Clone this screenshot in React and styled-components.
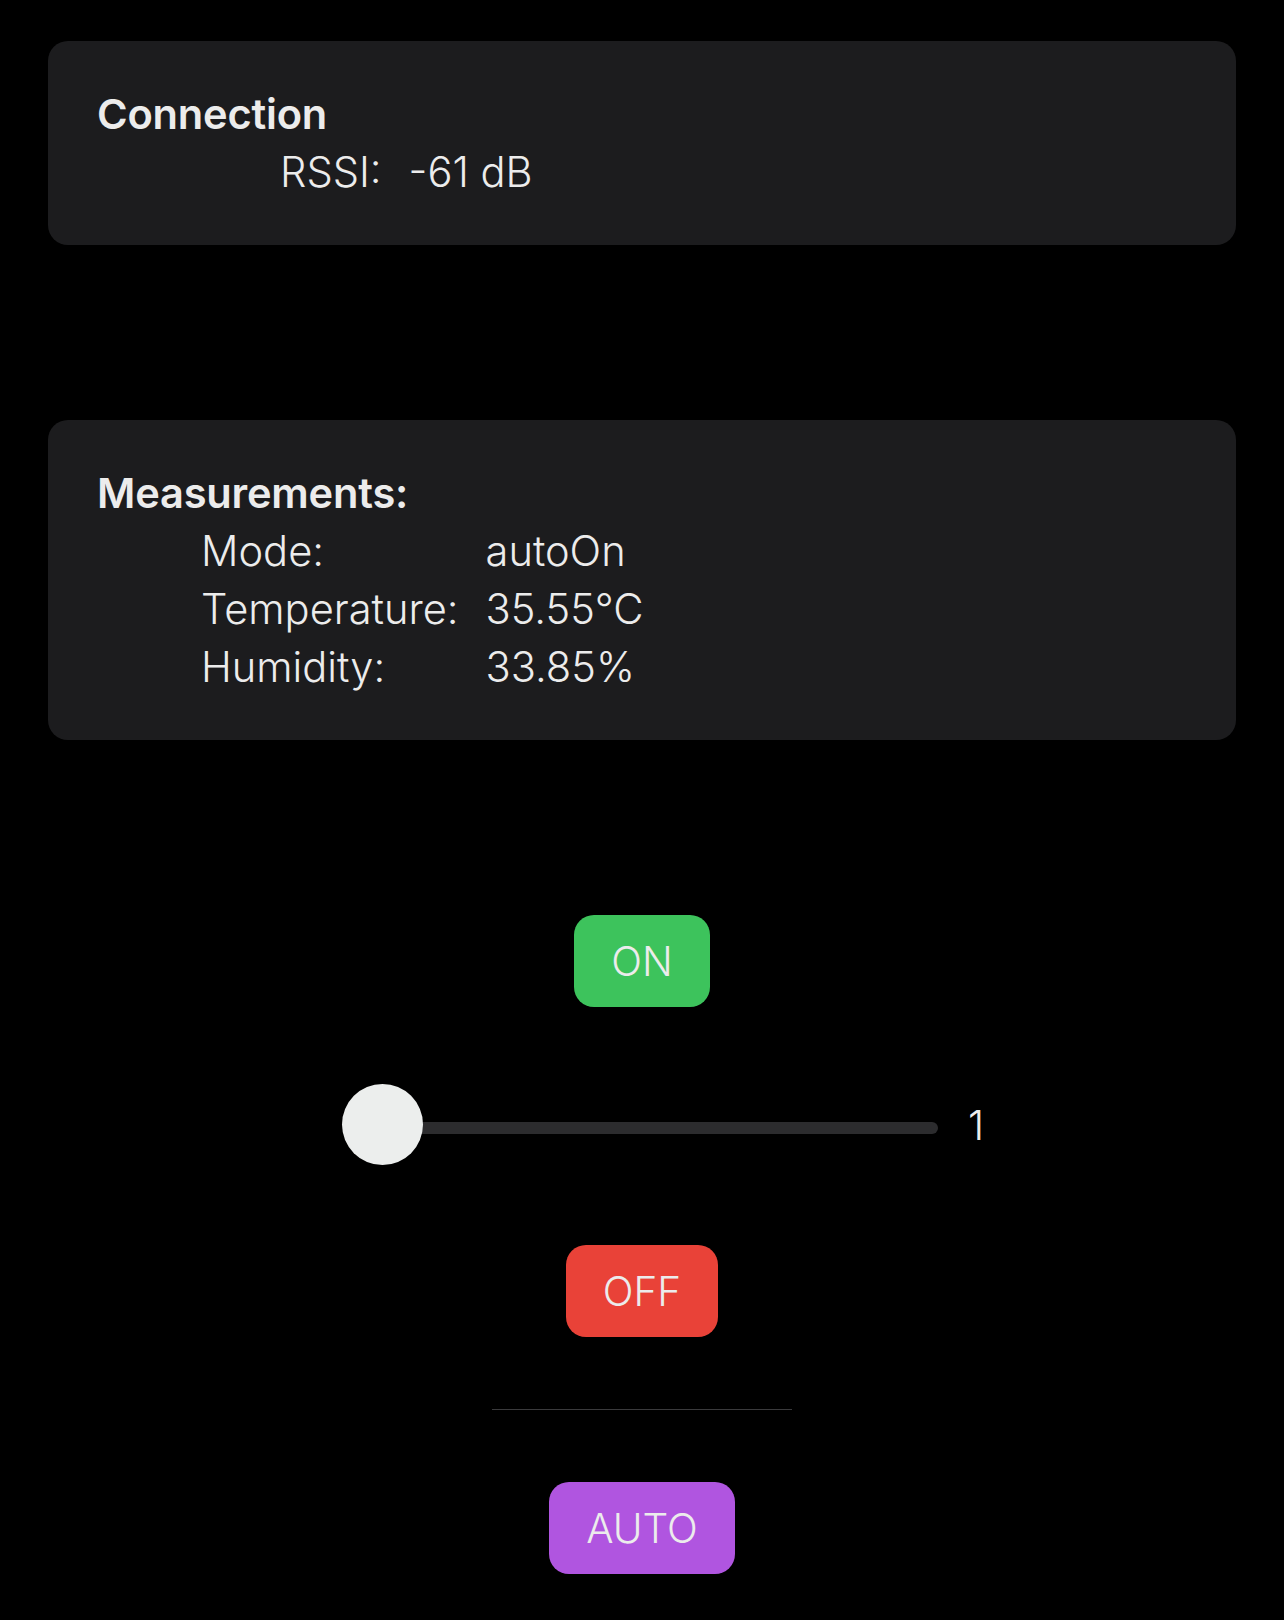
import React from 'react';
import styled, { createGlobalStyle } from 'styled-components';

const GlobalStyle = createGlobalStyle`
  html, body {
    margin: 0;
    padding: 0;
    background: #000;
  }
  body {
    font-family: Inter, "Noto Sans", sans-serif;
    color: #ececec;
  }
`;

const readings = [
  { label: 'Mode:', value: 'autoOn' },
  { label: 'Temperature:', value: '35.55°C' },
  { label: 'Humidity:', value: '33.85%' },
];

const App = () => {
  return (
    <Page>
      <GlobalStyle />
      <Card>
        <CardTitle>Connection</CardTitle>
        <InfoGrid $indent={183}>
          <span>RSSI:</span>
          <span>-61 dB</span>
        </InfoGrid>
      </Card>

      <Card $gap={175}>
        <CardTitle>Measurements:</CardTitle>
        <InfoGrid $indent={104}>
          {readings.map((r) => (
            <React.Fragment key={r.label}>
              <span>{r.label}</span>
              <span>{r.value}</span>
            </React.Fragment>
          ))}
        </InfoGrid>
      </Card>

      <Controls>
        <ActionButton $color="#3dc35c">ON</ActionButton>

        <SliderRow>
          <Slider>
            <Thumb />
            <Track />
          </Slider>
          <SliderValue>1</SliderValue>
        </SliderRow>

        <ActionButton $color="#e94238">OFF</ActionButton>

        <Divider />

        <ActionButton $color="#b055e0">AUTO</ActionButton>
      </Controls>
    </Page>
  );
};

const Page = styled.div`
  padding: 41px 48px 40px;
  display: flex;
  flex-direction: column;
`;

const Card = styled.section`
  background: #1c1c1e;
  border-radius: 20px;
  padding: 44px 49px;
  margin-top: ${(p) => p.$gap || 0}px;
`;

const CardTitle = styled.h2`
  margin: 0;
  font-size: 41.6px;
  font-weight: 600;
  line-height: 58px;
  letter-spacing: -0.2px;
`;

const InfoGrid = styled.div`
  display: grid;
  grid-template-columns: max-content max-content;
  column-gap: 27px;
  padding-left: ${(p) => p.$indent}px;
  font-size: 41.6px;
  font-weight: 300;
  line-height: 58px;
`;

const Controls = styled.div`
  margin-top: 175px;
  display: flex;
  flex-direction: column;
  align-items: center;
`;

const ActionButton = styled.button`
  height: 92px;
  padding: 0 37px;
  border: none;
  border-radius: 20px;
  background: ${(p) => p.$color};
  color: #ececec;
  font-family: Inter, "Noto Sans", sans-serif;
  font-size: 40.5px;
  font-weight: 300;
  cursor: pointer;
`;

const SliderRow = styled.div`
  align-self: stretch;
  display: flex;
  justify-content: center;
  align-items: center;
  gap: 30px;
  padding-left: 66px;
  margin: 77px 0 80px;
`;

const Slider = styled.div`
  width: 596px;
  display: flex;
  align-items: center;
`;

const Thumb = styled.div`
  width: 81px;
  height: 81px;
  border-radius: 50%;
  background: #eceeed;
  flex-shrink: 0;
  z-index: 1;
`;

const Track = styled.div`
  flex: 1;
  height: 12px;
  margin-left: -41px;
  margin-top: 7px;
  border-radius: 6px;
  background: #2c2c2e;
`;

const SliderValue = styled.span`
  width: 40px;
  font-size: 41px;
  font-weight: 300;
`;

const Divider = styled.hr`
  width: 300px;
  margin: 72px 0;
  border: none;
  border-top: 1px solid #3a3a3c;
`;

export default App;
